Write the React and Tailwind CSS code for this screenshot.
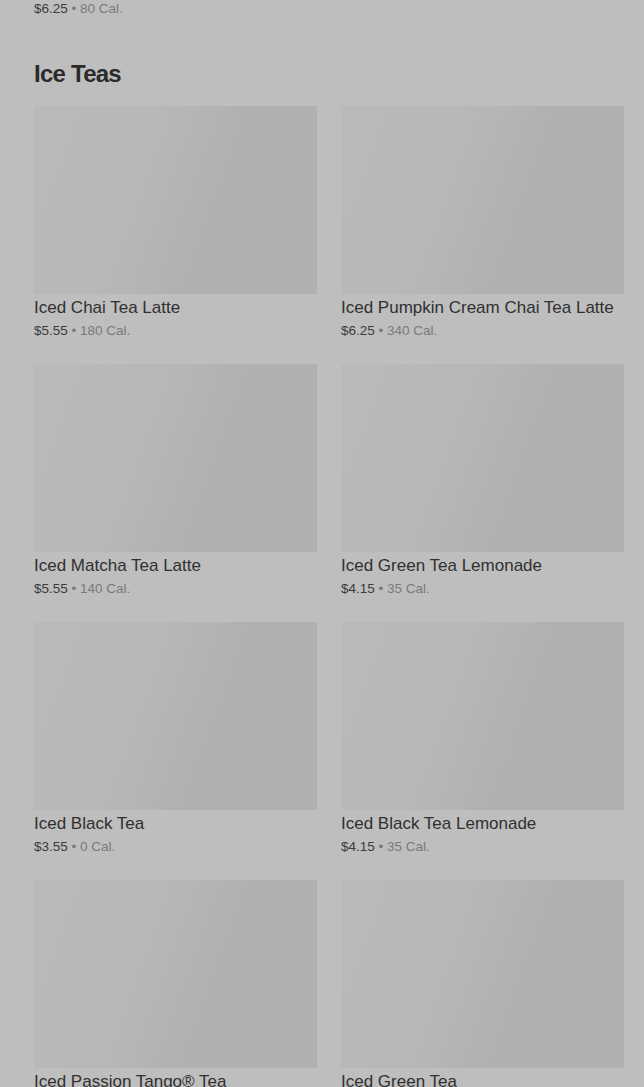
import React from "react";

const items = [
  { name: "Iced Chai Tea Latte", price: "$5.55", cal: "180 Cal." },
  { name: "Iced Pumpkin Cream Chai Tea Latte", price: "$6.25", cal: "340 Cal." },
  { name: "Iced Matcha Tea Latte", price: "$5.55", cal: "140 Cal." },
  { name: "Iced Green Tea Lemonade", price: "$4.15", cal: "35 Cal." },
  { name: "Iced Black Tea", price: "$3.55", cal: "0 Cal." },
  { name: "Iced Black Tea Lemonade", price: "$4.15", cal: "35 Cal." },
  { name: "Iced Passion Tango® Tea", price: "$4.15", cal: "0 Cal." },
  { name: "Iced Green Tea", price: "$3.55", cal: "0 Cal." },
];

function Price({ price, cal }) {
  return (
    <div className="text-[13.5px] leading-[18px] whitespace-nowrap">
      <span className="text-[#3b3b3b]">{price}</span>
      <span className="text-[#7a7a7a]"> • {cal}</span>
    </div>
  );
}

function Card({ item }) {
  return (
    <div className="flex flex-col">
      <div className="h-[188px] w-full bg-[linear-gradient(110deg,#bababa_0%,#b7b7b7_40%,#b1b1b1_60%,#b0b0b0_100%)]" />
      <div className="mt-[4px] text-[17px] leading-5 text-[#303030] whitespace-nowrap">
        {item.name}
      </div>
      <div className="mt-[4px]">
        <Price price={item.price} cal={item.cal} />
      </div>
    </div>
  );
}

export default function App() {
  return (
    <div
      className="h-[1087px] overflow-hidden bg-[#bebebe] pl-[34px] pr-[20px]"
      style={{ fontFamily: '"Liberation Sans", Arial, sans-serif' }}
    >
      <Price price="$6.25" cal="80 Cal." />
      <h2 className="mt-[40px] text-[24px] leading-8 font-bold tracking-[-0.75px] text-[#2b2b2b]">
        Ice Teas
      </h2>
      <div className="mt-[16px] grid grid-cols-2 gap-x-[24px] gap-y-[24px]">
        {items.map((it) => (
          <Card key={it.name} item={it} />
        ))}
      </div>
    </div>
  );
}
